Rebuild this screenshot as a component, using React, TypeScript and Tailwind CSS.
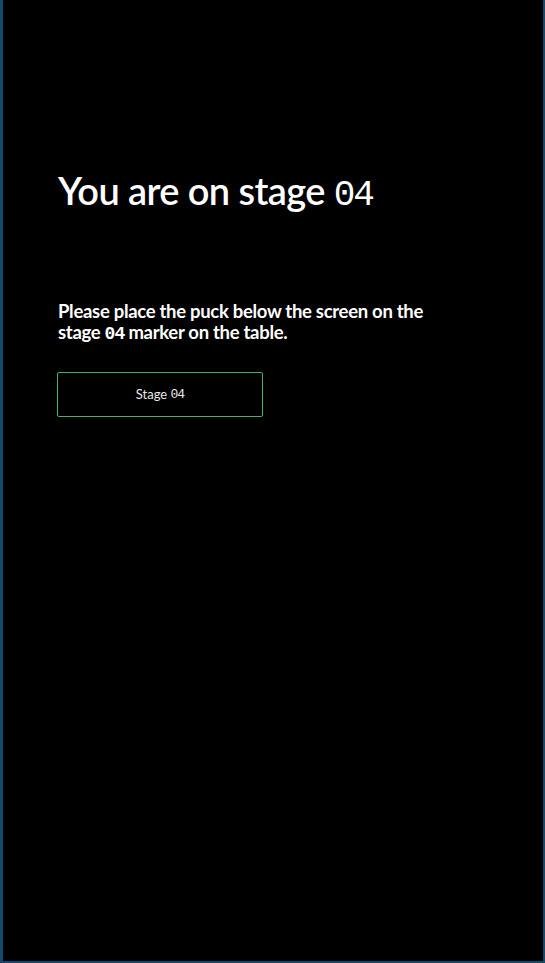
export default function App() {
  const num = "font-['Liberation_Mono',monospace]";
  return (
    <div className="h-[963px] w-[545px] bg-black border-l-[3px] border-r-[2px] border-b-[2px] border-[#12486a] font-['Lato','Open_Sans',sans-serif] text-white">
      <div className="pl-[55px] pr-[60px] pt-[168px]">
        <h1 className="text-[38px] leading-[44px] font-semibold tracking-[-0.6px]">
          You are on stage <span className={num + " tracking-[-2px] text-[36px] font-normal"}>04</span>
        </h1>
        <p className="mt-[83px] text-[18.5px] leading-[21px] font-bold tracking-[-0.3px] max-w-[380px]">
          Please place the puck below the screen on the stage <span className={num + " tracking-[-1px] text-[18px]"}>04</span> marker on the table.
        </p>
        <button className="-ml-px mt-[27px] flex h-[45px] w-[206px] items-center justify-center rounded-[2px] border border-[#3cb46e] text-[13px] text-[#e8e8e8]">
          Stage&nbsp;<span className={num + " tracking-[-1px]"}>04</span>
        </button>
      </div>
    </div>
  );
}
